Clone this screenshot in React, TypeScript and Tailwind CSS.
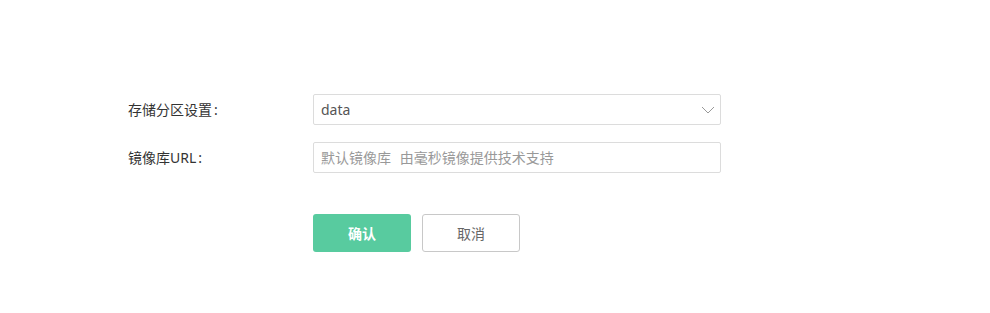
import React from "react";

export default function App() {
  const font = { fontFamily: '"Noto Sans", "Noto Sans CJK SC", sans-serif' };
  return (
    <div className="w-[990px] h-[313px] bg-white" style={font}>
      <div className="pt-[94px] pl-[128px] flex flex-col">
        <div className="flex items-center h-[31px]">
          <div className="w-[185px] text-[14px] text-[#333] [word-spacing:0px]">存储分区设置<span className="ml-[2px]">:</span></div>
          <div className="w-[408px] h-[31px] border border-[#dcdcdc] rounded-[2px] flex items-center justify-between pl-[7px] pr-[5px]">
            <span className="text-[14px] text-[#555]">data</span>
            <svg width="14" height="8" viewBox="0 0 14 8" fill="none">
              <path d="M1 1L7 7L13 1" stroke="#999" strokeWidth="1" />
            </svg>
          </div>
        </div>
        <div className="flex items-center h-[31px] mt-[17px]">
          <div className="w-[185px] text-[14px] text-[#333]">镜像库URL<span className="ml-[2px]">:</span></div>
          <div className="w-[408px] h-[31px] border border-[#dcdcdc] rounded-[2px] flex items-center pl-[7px]">
            <span className="text-[14px] text-[#999] [word-spacing:5px]">默认镜像库 由毫秒镜像提供技术支持</span>
          </div>
        </div>
        <div className="flex mt-[41px] ml-[185px] gap-[11px]">
          <button className="w-[98px] h-[38px] rounded-[3px] bg-[#58cb9f] text-white text-[14px] font-bold">确认</button>
          <button className="w-[98px] h-[38px] rounded-[3px] border border-[#c8c8c8] bg-white text-[#666] text-[14px]">取消</button>
        </div>
      </div>
    </div>
  );
}
